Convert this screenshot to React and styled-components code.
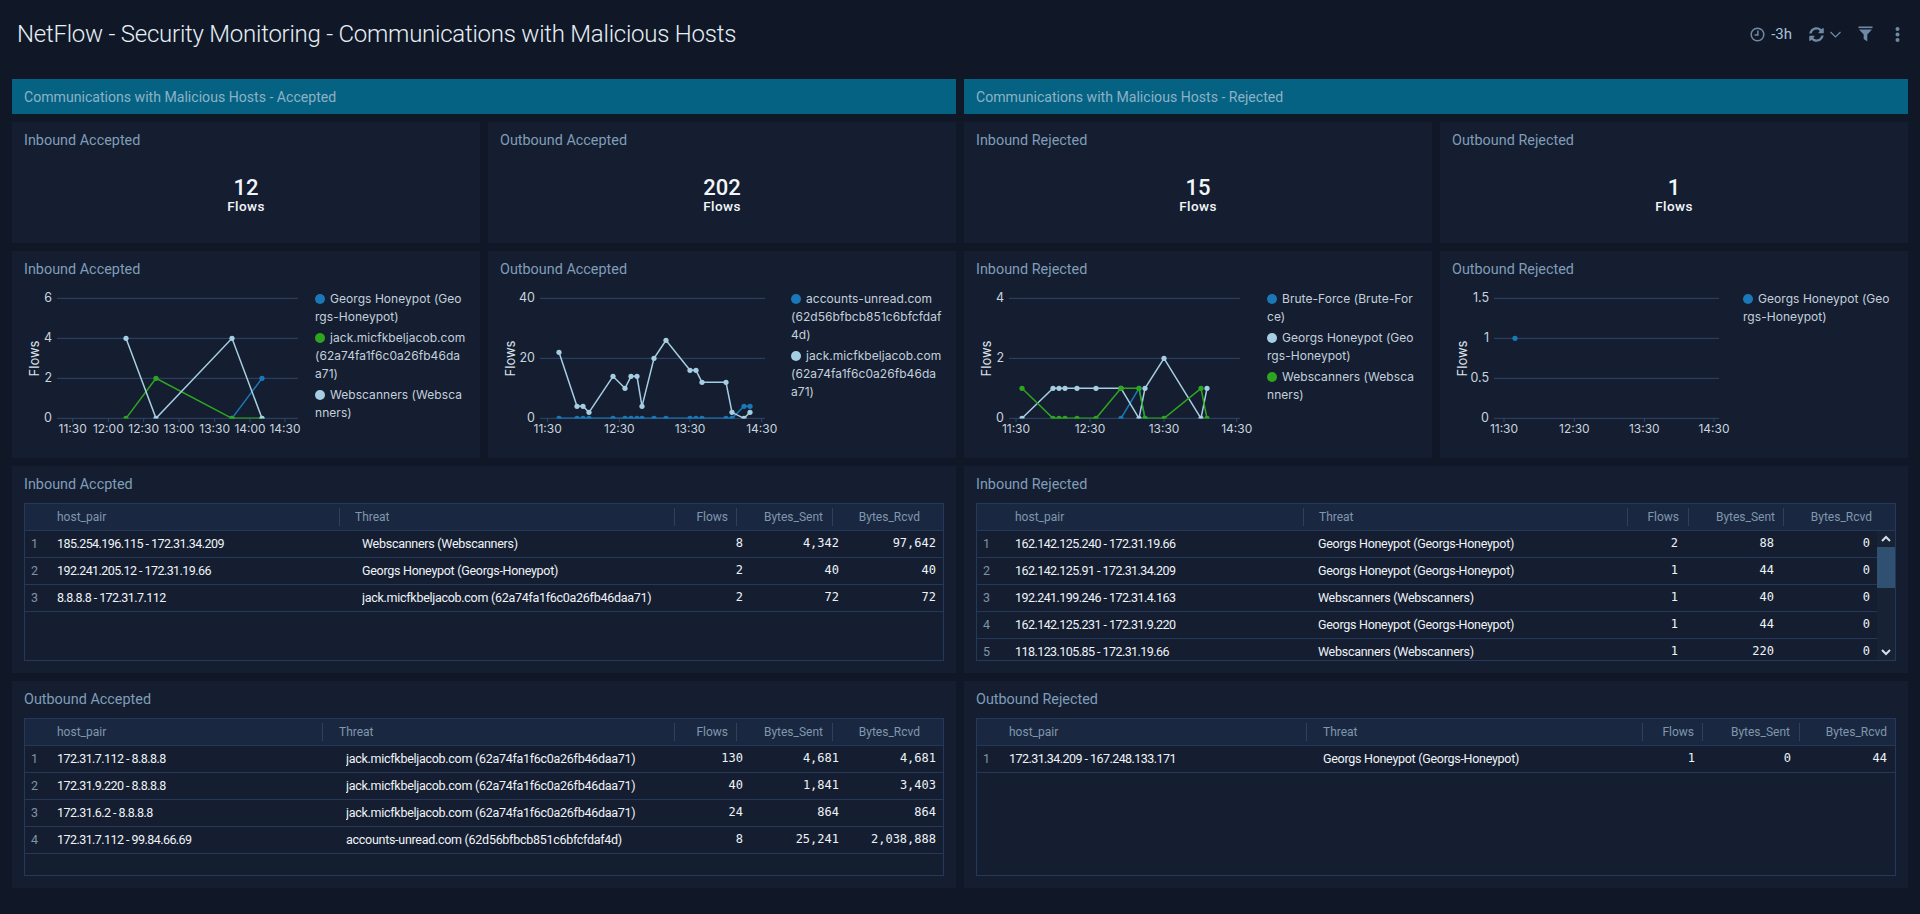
import React from 'react';
import styled, { createGlobalStyle } from 'styled-components';
import { FaSyncAlt } from 'react-icons/fa';

const GlobalStyle = createGlobalStyle`
  html, body {
    margin: 0;
    height: 914px;
    overflow: hidden;
    background: #101827;
    font-family: Roboto, "Liberation Sans", sans-serif;
  }
  * { box-sizing: border-box; }
`;

const Header = styled.header`
  height: 79px;
  padding: 0 17px 11px;
  display: flex;
  align-items: center;
  justify-content: space-between;
`;

const Title = styled.h1`
  margin: 0;
  font-size: 24px;
  font-weight: 300;
  letter-spacing: -0.24px;
  color: #e6eff6;
`;

const Tools = styled.div`
  display: flex;
  align-items: center;
  color: #6f8aa5;
  padding-right: 3px;
`;

const Range = styled.span`
  font-size: 15px;
  color: #a9c0d8;
  margin: 0 17px 0 6px;
`;

const Chevron = styled.svg`
  margin: 0 17px 0 6px;
`;

const ToolGap = styled.span`
  width: 22px;
`;

const Dashboard = styled.main`
  display: grid;
  grid-template-columns: 944px 944px;
  gap: 8px;
  padding: 0 12px;
`;

const Column = styled.section`
  display: flex;
  flex-direction: column;
  gap: 8px;
`;

const SectionBar = styled.div`
  height: 35px;
  background: #056282;
  color: #8bb2c6;
  font-size: 14.1px;
  line-height: 36px;
  padding-left: 12px;
`;

const PanelRow = styled.div`
  display: grid;
  grid-template-columns: 468px 468px;
  gap: 8px;
`;

const Panel = styled.article`
  background: #151e30;
  height: ${(p) => p.$height}px;
  display: flex;
  flex-direction: column;
  padding: 0 12px ${(p) => (p.$chart ? 0 : 12)}px;
`;

const PanelTitle = styled.h2`
  margin: 0;
  height: ${(p) => p.$height || 37}px;
  line-height: 37px;
  font-size: 14.4px;
  font-weight: 400;
  color: #7f9db8;
`;

const StatBody = styled.div`
  text-align: center;
  color: #f2f6fa;
  padding-top: 18px;
`;

const StatValue = styled.div`
  font-size: 22px;
  line-height: 22px;
  font-weight: 500;
`;

const StatUnit = styled.div`
  font-size: 13.5px;
  line-height: 14px;
  letter-spacing: 0.4px;
  font-weight: 500;
`;

const ChartBody = styled.div`
  display: flex;
  margin-left: -12px;
`;

const ChartSvg = styled.svg`
  flex: none;
  display: block;
  font-family: Inter, "Liberation Sans", sans-serif;
`;

const Legend = styled.div`
  padding-top: 5px;
  font-family: Inter, "Liberation Sans", sans-serif;
  font-size: 12px;
  letter-spacing: 0.05px;
  color: #c3d0dc;
`;

const LegendItem = styled.div`
  margin-bottom: 3px;
`;

const LegendLine = styled.div`
  line-height: 18px;
  white-space: nowrap;
`;

const LegendDot = styled.span`
  display: inline-block;
  width: 10px;
  height: 10px;
  border-radius: 50%;
  background: ${(p) => p.$color};
  margin-right: 5px;
  vertical-align: -0.5px;
`;

const Table = styled.div`
  position: relative;
  height: 158px;
  border: 1px solid #24395a;
  overflow: hidden;
`;

const HeadRow = styled.div`
  display: grid;
  grid-template-columns: ${(p) => p.$cols};
  height: 27px;
  background: #1a2740;
  border-bottom: 1px solid #24395a;
  align-items: center;
  font-size: 12px;
  color: #7f97ad;
`;

const HeadCell = styled.div`
  height: 18px;
  line-height: 18px;
  padding: ${(p) => (p.$right ? `0 ${p.$pad}px 0 0` : `0 0 0 ${p.$pad}px`)};
  text-align: ${(p) => (p.$right ? 'right' : 'left')};
  border-right: ${(p) => (p.$sep ? '1px solid #2c415f' : 'none')};
  white-space: nowrap;
`;

const BodyRow = styled.div`
  display: grid;
  grid-template-columns: ${(p) => p.$cols};
  height: 27px;
  line-height: 25px;
  border-bottom: 1px solid #24395a;
  font-size: 12.5px;
  color: #eef3f8;
  background: #151e30;
`;

const IndexCell = styled.div`
  color: #7f93a8;
  padding-left: 6px;
`;

const TextCell = styled.div`
  white-space: nowrap;
  overflow: hidden;
  letter-spacing: ${(p) => p.$spacing}px;
`;

const NumberCell = styled.div`
  text-align: right;
  font-family: "DejaVu Sans Mono", "Liberation Mono", monospace;
  font-size: 12px;
`;

const Scrollbar = styled.div`
  position: absolute;
  top: 27px;
  right: 0;
  bottom: 0;
  width: 18px;
  background: #172235;
  color: #d5dfe8;
`;

const ScrollThumb = styled.div`
  position: absolute;
  top: 16px;
  left: 0;
  right: 0;
  height: 41px;
  background: #2f5070;
`;

const ScrollArrow = styled.svg`
  position: absolute;
  left: 4px;
  ${(p) => (p.$up ? 'top: 4px;' : 'bottom: 4px;')}
`;

const COLORS = { blue: '#1a78b8', green: '#2ea51f', light: '#a6cee3' };

// chart points are measured in px*3 from the crop of each panel, so they stay easy to compare
const Chart = ({ id, offset, gridX, grid, xLabels, series, flowsX, labelX }) => {
  const top = 35;
  const x = (v) => v / 3;
  const y = (v) => v / 3;
  return (
    <ChartSvg width="303" height="170" viewBox={`${offset} ${top} 303 170`}>
      <clipPath id={id}>
        <rect x={x(gridX[0])} y={top} width={x(gridX[1] - gridX[0])} height={168.5 - top} />
      </clipPath>
      {grid.map(([label, gy]) => (
        <g key={label}>
          <line x1={x(gridX[0])} x2={x(gridX[1])} y1={y(gy)} y2={y(gy)} stroke="#30466a" strokeWidth="1" />
          <text x={x(labelX)} y={y(gy) + 4} textAnchor="end" fontSize="12.5" fill="#c8d4df">{label}</text>
        </g>
      ))}
      {xLabels.map(([label, lx]) => (
        <g key={label}>
          <line x1={x(lx)} x2={x(lx)} y1={168.3} y2={172} stroke="#30466a" />
          <text x={x(lx)} y={183} textAnchor="middle" fontSize="12" fill="#c8d4df">{label}</text>
        </g>
      ))}
      <text
        transform={`translate(${x(flowsX)} 108.5) rotate(-90)`}
        textAnchor="middle"
        dominantBaseline="central"
        fontSize="13"
        fill="#dbe4ec"
      >
        Flows
      </text>
      <g clipPath={`url(#${id})`}>
        {series.map((s, i) => (
          <g key={i}>
            <polyline
              points={s.pts.map(([a, b]) => `${x(a)},${y(b)}`).join(' ')}
              fill="none"
              stroke={COLORS[s.color]}
              strokeWidth="1.5"
            />
            {s.pts.map(([a, b], j) => (
              <circle key={j} cx={x(a)} cy={y(b)} r="2.6" fill={COLORS[s.color]} />
            ))}
          </g>
        ))}
      </g>
    </ChartSvg>
  );
};

const ChartLegend = ({ items }) => (
  <Legend>
    {items.map((item) => (
      <LegendItem key={item.lines[0]}>
        {item.lines.map((line, i) => (
          <LegendLine key={line}>
            {i === 0 && <LegendDot $color={COLORS[item.color]} />}
            {line}
          </LegendLine>
        ))}
      </LegendItem>
    ))}
  </Legend>
);

const ChartPanel = ({ title, legend, ...chart }) => (
  <Panel $height={207} $chart>
    <PanelTitle $height={34}>{title}</PanelTitle>
    <ChartBody>
      <Chart {...chart} />
      <ChartLegend items={legend} />
    </ChartBody>
  </Panel>
);

const StatPanel = ({ title, value }) => (
  <Panel $height={121}>
    <PanelTitle>{title}</PanelTitle>
    <StatBody>
      <StatValue>{value}</StatValue>
      <StatUnit>Flows</StatUnit>
    </StatBody>
  </Panel>
);

const DataTable = ({ title, head, threatPad, pads, bodyCols, rows, scroll }) => (
  <Panel $height={207}>
    <PanelTitle>{title}</PanelTitle>
    <Table>
      <HeadRow $cols={head}>
        <HeadCell />
        <HeadCell $pad={0} $sep>host_pair</HeadCell>
        <HeadCell $pad={threatPad} $sep>Threat</HeadCell>
        <HeadCell $right $pad={pads[0]} $sep>Flows</HeadCell>
        <HeadCell $right $pad={pads[1]} $sep>Bytes_Sent</HeadCell>
        <HeadCell $right $pad={pads[2]}>Bytes_Rcvd</HeadCell>
      </HeadRow>
      {rows.map((row, i) => (
        <BodyRow key={row[0]} $cols={bodyCols}>
          <IndexCell>{i + 1}</IndexCell>
          <TextCell $spacing={-0.55}>{row[0]}</TextCell>
          <TextCell $spacing={-0.28}>{row[1]}</TextCell>
          <NumberCell>{row[2]}</NumberCell>
          <NumberCell>{row[3]}</NumberCell>
          <NumberCell>{row[4]}</NumberCell>
        </BodyRow>
      ))}
      {scroll && (
        <Scrollbar>
          <ScrollArrow $up width="10" height="8" viewBox="0 0 10 8">
            <path d="M1 6 L5 2 L9 6" fill="none" stroke="currentColor" strokeWidth="2" />
          </ScrollArrow>
          <ScrollThumb />
          <ScrollArrow width="10" height="8" viewBox="0 0 10 8">
            <path d="M1 2 L5 6 L9 2" fill="none" stroke="currentColor" strokeWidth="2" />
          </ScrollArrow>
        </Scrollbar>
      )}
    </Table>
  </Panel>
);

const JACK = 'jack.micfkbeljacob.com (62a74fa1f6c0a26fb46daa71)';
const GEORGS = 'Georgs Honeypot (Georgs-Honeypot)';
const WEB = 'Webscanners (Webscanners)';

const JACK_LEGEND = ['jack.micfkbeljacob.com', '(62a74fa1f6c0a26fb46da', 'a71)'];
const GEORGS_LEGEND = ['Georgs Honeypot (Geo', 'rgs-Honeypot)'];
const WEB_LEGEND = ['Webscanners (Websca', 'nners)'];

const ZERO = 505;

const outboundXs = [237, 291, 309, 327, 399, 435, 453, 471, 486, 522, 558, 630, 648, 666, 738, 756];

const charts = {
  inAccepted: {
    id: 'clip-in-accepted',
    title: 'Inbound Accepted',
    offset: 12,
    gridX: [171, 894],
    labelX: 156,
    flowsX: 102,
    grid: [['6', 145], ['4', 265], ['2', 385], ['0', ZERO]],
    xLabels: [['11:30', 218], ['12:00', 325], ['12:30', 431], ['13:00', 537], ['13:30', 644], ['14:00', 750], ['14:30', 855]],
    series: [
      { color: 'blue', pts: [[696, ZERO], [786, 385]] },
      { color: 'green', pts: [[378, ZERO], [468, 385], [696, ZERO], [786, ZERO]] },
      { color: 'light', pts: [[378, 265], [468, ZERO], [696, 265], [786, ZERO]] },
    ],
    legend: [
      { color: 'blue', lines: GEORGS_LEGEND },
      { color: 'green', lines: JACK_LEGEND },
      { color: 'light', lines: WEB_LEGEND },
    ],
  },
  outAccepted: {
    id: 'clip-out-accepted',
    title: 'Outbound Accepted',
    offset: 8,
    gridX: [180, 855],
    labelX: 165,
    flowsX: 90,
    grid: [['40', 145], ['20', 325], ['0', ZERO]],
    xLabels: [['11:30', 203], ['12:30', 418], ['13:30', 630], ['14:30', 845]],
    series: [
      { color: 'blue', pts: [...outboundXs.map((v) => [v, ZERO]), [792, 469], [810, 469]] },
      {
        color: 'light',
        pts: [[237, 307], [291, 469], [309, 469], [327, 487], [399, 379], [435, 415], [453, 379], [471, 379], [486, 469], [522, 325], [558, 271], [630, 361], [648, 361], [666, 397], [738, 397], [756, 487], [792, ZERO], [810, 487]],
      },
    ],
    legend: [
      { color: 'blue', lines: ['accounts-unread.com', '(62d56bfbcb851c6bfcfdaf', '4d)'] },
      { color: 'light', lines: JACK_LEGEND },
    ],
  },
  inRejected: {
    id: 'clip-in-rejected',
    title: 'Inbound Rejected',
    offset: 4,
    gridX: [147, 840],
    labelX: 132,
    flowsX: 78,
    grid: [['4', 145], ['2', 325], ['0', ZERO]],
    xLabels: [['11:30', 168], ['12:30', 390], ['13:30', 612], ['14:30', 830]],
    series: [
      { color: 'blue', pts: [[483, ZERO], [537, 415], [555, ZERO]] },
      { color: 'light', pts: [[186, ZERO], [279, 415], [297, 415], [315, 415], [351, 415], [408, 415], [483, 415], [537, ZERO], [555, 415], [612, 325], [723, ZERO], [741, 415]] },
      { color: 'green', pts: [[186, 415], [279, ZERO], [297, ZERO], [315, ZERO], [351, ZERO], [408, ZERO], [483, 415], [537, 415], [555, ZERO], [612, ZERO], [723, 415], [741, ZERO]] },
    ],
    legend: [
      { color: 'blue', lines: ['Brute-Force (Brute-For', 'ce)'] },
      { color: 'light', lines: GEORGS_LEGEND },
      { color: 'green', lines: WEB_LEGEND },
    ],
  },
  outRejected: {
    id: 'clip-out-rejected',
    title: 'Outbound Rejected',
    offset: 0,
    gridX: [162, 837],
    labelX: 147,
    flowsX: 65,
    grid: [['1.5', 145], ['1', 265], ['0.5', 385], ['0', ZERO]],
    xLabels: [['11:30', 192], ['12:30', 403], ['13:30', 613], ['14:30', 822]],
    series: [{ color: 'blue', pts: [[225, 265]] }],
    legend: [{ color: 'blue', lines: GEORGS_LEGEND }],
  },
};

const tables = {
  inAccepted: {
    title: 'Inbound Accpted',
    head: '32px 283px 335px 62px 96px 110px',
    bodyCols: '32px 305px 328px 53px 96px 97px',
    threatPad: 15,
    pads: [8, 9, 23],
    rows: [
      ['185.254.196.115 - 172.31.34.209', WEB, '8', '4,342', '97,642'],
      ['192.241.205.12 - 172.31.19.66', GEORGS, '2', '40', '40'],
      ['8.8.8.8 - 172.31.7.112', JACK, '2', '72', '72'],
    ],
  },
  inRejected: {
    title: 'Inbound Rejected',
    head: '38px 289px 324px 61px 95px 94px',
    bodyCols: '38px 303px 322px 38px 96px 96px',
    threatPad: 15,
    pads: [9, 8, 6],
    scroll: true,
    rows: [
      ['162.142.125.240 - 172.31.19.66', GEORGS, '2', '88', '0'],
      ['162.142.125.91 - 172.31.34.209', GEORGS, '1', '44', '0'],
      ['192.241.199.246 - 172.31.4.163', WEB, '1', '40', '0'],
      ['162.142.125.231 - 172.31.9.220', GEORGS, '1', '44', '0'],
      ['118.123.105.85 - 172.31.19.66', WEB, '1', '220', '0'],
    ],
  },
  outAccepted: {
    title: 'Outbound Accepted',
    head: '32px 266px 352px 62px 96px 110px',
    bodyCols: '32px 289px 344px 53px 96px 97px',
    threatPad: 16,
    pads: [8, 9, 23],
    rows: [
      ['172.31.7.112 - 8.8.8.8', JACK, '130', '4,681', '4,681'],
      ['172.31.9.220 - 8.8.8.8', JACK, '40', '1,841', '3,403'],
      ['172.31.6.2 - 8.8.8.8', JACK, '24', '864', '864'],
      ['172.31.7.112 - 99.84.66.69', 'accounts-unread.com (62d56bfbcb851c6bfcfdaf4d)', '8', '25,241', '2,038,888'],
    ],
  },
  outRejected: {
    title: 'Outbound Rejected',
    head: '32px 298px 336px 60px 97px 95px',
    bodyCols: '32px 314px 327px 45px 96px 96px',
    threatPad: 16,
    pads: [8, 9, 8],
    rows: [['172.31.34.209 - 167.248.133.171', GEORGS, '1', '0', '44']],
  },
};

const ClockIcon = () => (
  <svg width="15" height="15" viewBox="0 0 15 15" fill="none" stroke="currentColor" strokeWidth="1.5">
    <circle cx="7.5" cy="7.5" r="6.3" />
    <path d="M7.9 3.6 V8 H4.6" />
  </svg>
);

const FilterIcon = () => (
  <svg width="15" height="16" viewBox="0 0 15 16" fill="currentColor">
    <rect x="0.5" y="0.5" width="14" height="1.6" />
    <path d="M1 3.4 H14 L9.3 8.6 V15.5 L5.7 12.9 V8.6 Z" />
  </svg>
);

const MoreIcon = () => (
  <svg width="5" height="15" viewBox="0 0 5 15" fill="currentColor">
    <circle cx="2.5" cy="2" r="2" />
    <circle cx="2.5" cy="7.5" r="2" />
    <circle cx="2.5" cy="13" r="2" />
  </svg>
);

export default function App() {
  return (
    <>
      <GlobalStyle />
      <Header>
        <Title>NetFlow - Security Monitoring - Communications with Malicious Hosts</Title>
        <Tools>
          <ClockIcon />
          <Range>-3h</Range>
          <FaSyncAlt size={15} />
          <Chevron width="11" height="7" viewBox="0 0 11 7" fill="none" stroke="currentColor" strokeWidth="1.2">
            <path d="M0.5 1 L5.5 6 L10.5 1" />
          </Chevron>
          <FilterIcon />
          <ToolGap />
          <MoreIcon />
        </Tools>
      </Header>
      <Dashboard>
        <Column>
          <SectionBar>Communications with Malicious Hosts - Accepted</SectionBar>
          <PanelRow>
            <StatPanel title="Inbound Accepted" value="12" />
            <StatPanel title="Outbound Accepted" value="202" />
          </PanelRow>
          <PanelRow>
            <ChartPanel {...charts.inAccepted} />
            <ChartPanel {...charts.outAccepted} />
          </PanelRow>
          <DataTable {...tables.inAccepted} />
          <DataTable {...tables.outAccepted} />
        </Column>
        <Column>
          <SectionBar>Communications with Malicious Hosts - Rejected</SectionBar>
          <PanelRow>
            <StatPanel title="Inbound Rejected" value="15" />
            <StatPanel title="Outbound Rejected" value="1" />
          </PanelRow>
          <PanelRow>
            <ChartPanel {...charts.inRejected} />
            <ChartPanel {...charts.outRejected} />
          </PanelRow>
          <DataTable {...tables.inRejected} />
          <DataTable {...tables.outRejected} />
        </Column>
      </Dashboard>
    </>
  );
}
